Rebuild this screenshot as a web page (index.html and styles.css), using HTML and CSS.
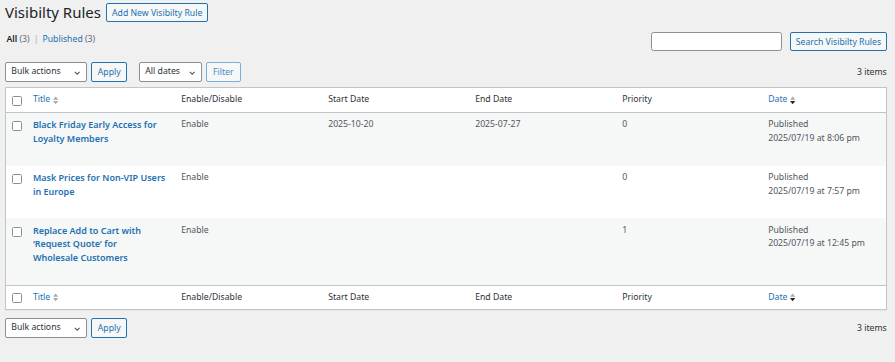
FILE: index.html
```html
<!DOCTYPE html>
<html lang="en">
<head>
    <meta charset="UTF-8">
    <meta name="viewport" content="width=device-width, initial-scale=1.0">
    <title>Visibilty Rules</title>
    <link rel="stylesheet" href="styles.css">
</head>
<body>
    <div class="wrap">
        <div class="page-head">
            <h1>Visibilty Rules</h1>
            <a href="#" class="btn">Add New Visibilty Rule</a>
        </div>

        <div class="filters-row">
            <ul class="views">
                <li class="current">All <span class="count">(3)</span></li>
                <li class="sep">|</li>
                <li><a href="#">Published</a> <span class="count">(3)</span></li>
            </ul>
            <div class="search-box">
                <input type="search" class="search-input">
                <button class="btn">Search Visibilty Rules</button>
            </div>
        </div>

        <div class="tablenav">
            <div class="select">Bulk actions
                <svg class="chevron" viewBox="0 0 8 5"><polyline points="1,1 4,4 7,1"/></svg>
            </div>
            <button class="btn">Apply</button>
            <div class="select select-dates">All dates
                <svg class="chevron" viewBox="0 0 8 5"><polyline points="1,1 4,4 7,1"/></svg>
            </div>
            <button class="btn btn-light">Filter</button>
            <div class="items">3 items</div>
        </div>

        <table class="list-table">
            <colgroup>
                <col class="col-cb">
                <col class="col-title">
                <col class="col-mid">
                <col class="col-mid">
                <col class="col-mid">
                <col class="col-prio">
                <col>
            </colgroup>
            <thead>
                <tr>
                    <td class="check"><input type="checkbox" class="cb"></td>
                    <th><a href="#" class="sort">Title <svg class="sort-icon" viewBox="0 0 6 10"><polygon class="up" points="0,4.2 3,0.6 6,4.2"/><polygon class="down" points="0,5.8 3,9.4 6,5.8"/></svg></a></th>
                    <th>Enable/Disable</th>
                    <th>Start Date</th>
                    <th>End Date</th>
                    <th>Priority</th>
                    <th><a href="#" class="sort">Date <svg class="sort-icon active-desc" viewBox="0 0 6 10"><polygon class="up" points="0,4.2 3,0.6 6,4.2"/><polygon class="down" points="0,5.8 3,9.4 6,5.8"/></svg></a></th>
                </tr>
            </thead>
            <tbody>
                <tr class="alt">
                    <td class="check"><input type="checkbox" class="cb"></td>
                    <td><a href="#" class="row-title">Black Friday Early Access for Loyalty Members</a><div class="row-actions"></div></td>
                    <td>Enable</td>
                    <td>2025-10-20</td>
                    <td>2025-07-27</td>
                    <td>0</td>
                    <td>Published<br>2025/07/19 at 8:06 pm</td>
                </tr>
                <tr>
                    <td class="check"><input type="checkbox" class="cb"></td>
                    <td><a href="#" class="row-title">Mask Prices for Non-VIP Users in Europe</a><div class="row-actions"></div></td>
                    <td>Enable</td>
                    <td></td>
                    <td></td>
                    <td>0</td>
                    <td>Published<br>2025/07/19 at 7:57 pm</td>
                </tr>
                <tr class="alt">
                    <td class="check"><input type="checkbox" class="cb"></td>
                    <td><a href="#" class="row-title">Replace Add to Cart with ‘Request Quote’ for<br>Wholesale Customers</a><div class="row-actions"></div></td>
                    <td>Enable</td>
                    <td></td>
                    <td></td>
                    <td>1</td>
                    <td>Published<br>2025/07/19 at 12:45 pm</td>
                </tr>
            </tbody>
            <tfoot>
                <tr>
                    <td class="check"><input type="checkbox" class="cb"></td>
                    <th><a href="#" class="sort">Title <svg class="sort-icon" viewBox="0 0 6 10"><polygon class="up" points="0,4.2 3,0.6 6,4.2"/><polygon class="down" points="0,5.8 3,9.4 6,5.8"/></svg></a></th>
                    <th>Enable/Disable</th>
                    <th>Start Date</th>
                    <th>End Date</th>
                    <th>Priority</th>
                    <th><a href="#" class="sort">Date <svg class="sort-icon active-desc" viewBox="0 0 6 10"><polygon class="up" points="0,4.2 3,0.6 6,4.2"/><polygon class="down" points="0,5.8 3,9.4 6,5.8"/></svg></a></th>
                </tr>
            </tfoot>
        </table>

        <div class="tablenav tablenav-bottom">
            <div class="select">Bulk actions
                <svg class="chevron" viewBox="0 0 8 5"><polyline points="1,1 4,4 7,1"/></svg>
            </div>
            <button class="btn">Apply</button>
            <div class="items">3 items</div>
        </div>
    </div>
</body>
</html>
```

FILE: styles.css
```css
body {
    font-family: 'Noto Sans', sans-serif;
    font-size: 8.7px;
    background-color: #f0f0f1;
    color: #3c434a;
    margin: 0;
    padding: 0;
}
a {
    color: #2271b1;
    text-decoration: none;
}
.wrap {
    padding: 0 8.3px 0 5px;
}
.page-head {
    display: flex;
    align-items: center;
    gap: 5px;
    padding-top: 2.7px;
}
h1 {
    margin: 0;
    font-size: 15px;
    font-weight: 400;
    line-height: 19.7px;
    color: #1d2327;
}
.btn {
    display: inline-flex;
    align-items: center;
    box-sizing: border-box;
    height: 19.7px;
    padding: 0 6.7px;
    font-family: inherit;
    font-size: 8.7px;
    color: #2271b1;
    background-color: #f6f7f7;
    border: 1px solid #2271b1;
    border-radius: 2px;
    cursor: pointer;
}
.page-head .btn {
    padding: 0 5px;
}
.btn-light {
    color: #4a8ac6;
    border-color: #7aaedb;
}
.filters-row {
    display: flex;
    justify-content: space-between;
    align-items: flex-start;
    margin-top: 10px;
}
.views {
    list-style: none;
    margin: 0;
    padding: 0 0 0 1.5px;
    display: flex;
    gap: 3px;
    line-height: 14px;
}
.views .current {
    font-weight: 600;
    color: #1d2327;
}
.views .count {
    font-weight: 400;
    color: #646970;
}
.views .sep {
    color: #a7aaad;
    margin: 0 1px;
}
.search-box {
    display: flex;
    gap: 8px;
}
.search-input {
    box-sizing: border-box;
    width: 131.6px;
    height: 18.7px;
    border: 1px solid #8c8f94;
    border-radius: 2.7px;
    background: #fff;
    margin: 0;
}
.search-box .btn {
    height: 18.7px;
    width: 96.4px;
    justify-content: center;
    padding: 0;
}
.tablenav {
    display: flex;
    align-items: center;
    gap: 4px;
    margin: 11.3px 0 5.3px;
}
.tablenav-bottom {
    margin-top: 8.4px;
}
.select {
    position: relative;
    box-sizing: border-box;
    width: 82px;
    height: 19.7px;
    line-height: 17.7px;
    padding-left: 5.3px;
    color: #2c3338;
    background-color: #fff;
    border: 1px solid #8c8f94;
    border-radius: 2px;
}
.select-dates {
    width: 63px;
    margin-left: 7.6px;
}
.chevron {
    position: absolute;
    right: 5.6px;
    top: 8px;
    width: 6.4px;
    height: 4px;
    fill: none;
    stroke: #50575e;
    stroke-width: 1.3;
}
.tablenav .btn {
    width: 36.4px;
    justify-content: center;
    padding: 0;
}
.tablenav .btn-light {
    width: 34.6px;
}
.items {
    margin-left: auto;
    color: #2c3338;
}
.list-table {
    width: 100%;
    table-layout: fixed;
    border-collapse: collapse;
    background-color: #fff;
    border: 1px solid #c3c4c7;
    box-shadow: 0 1px 1px rgba(0, 0, 0, 0.04);
}
.col-cb {
    width: 20.7px;
}
.col-title {
    width: 148.3px;
}
.col-mid {
    width: 147px;
}
.col-prio {
    width: 146px;
}
.list-table th, .list-table td {
    text-align: left;
    vertical-align: top;
    padding: 5.7px 6.7px 5.3px;
    font-weight: 400;
    line-height: 13.3px;
    color: #50575e;
}
.list-table thead th, .list-table thead td,
.list-table tfoot th, .list-table tfoot td {
    color: #2c3338;
    padding: 5px 6.7px;
    height: 12.3px;
}
.list-table thead tr {
    border-bottom: 1px solid #c3c4c7;
}
.list-table tfoot tr {
    border-top: 1px solid #c3c4c7;
}
.list-table .check {
    padding: 0;
}
.cb {
    appearance: none;
    display: block;
    box-sizing: border-box;
    width: 10px;
    height: 10px;
    margin: 8.7px 0 0 6.3px;
    border: 1px solid #8c8f94;
    border-radius: 1.5px;
    background: #fff;
}
thead .cb, tfoot .cb {
    margin-top: 7.7px;
}
tr.alt {
    background-color: #f6f7f7;
}
.row-title {
    display: block;
    font-size: 9px;
    font-weight: 600;
    line-height: 13.3px;
}
.row-actions {
    height: 15.3px;
}
.sort {
    display: inline-flex;
    align-items: center;
    gap: 3px;
}
.sort-icon {
    width: 5.3px;
    height: 8.7px;
}
.sort-icon polygon {
    fill: #a7aaad;
}
.sort-icon.active-desc .down {
    fill: #1d2327;
}
```
